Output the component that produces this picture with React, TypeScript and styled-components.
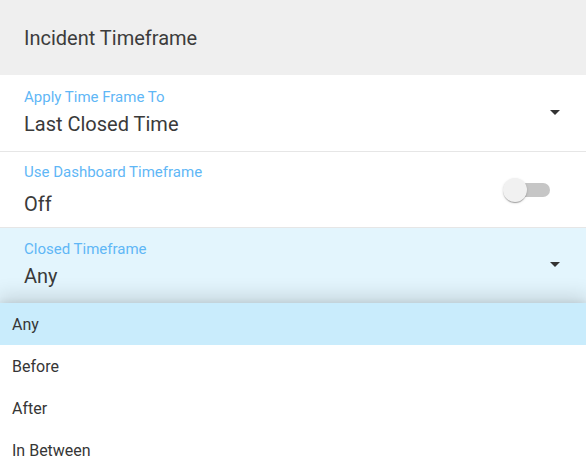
import React, { useState } from "react";
import styled, { createGlobalStyle } from "styled-components";

const GlobalStyle = createGlobalStyle`
  html, body {
    margin: 0;
    padding: 0;
    background: #ffffff;
  }
  body {
    font-family: Roboto, "Noto Sans", Arial, sans-serif;
    color: #333333;
    -webkit-font-smoothing: antialiased;
  }
`;

const Panel = styled.div`
  width: 586px;
  height: 468px;
  overflow: hidden;
  display: flex;
  flex-direction: column;
`;

const Header = styled.header`
  height: 75px;
  flex: none;
  background: #efefef;
  display: flex;
  align-items: center;
  padding: 0 24px;
  font-size: 20px;
  color: #3c3c3c;
`;

const Field = styled.div<{ $active?: boolean; $switchRow?: boolean }>`
  flex: none;
  display: flex;
  align-items: center;
  justify-content: space-between;
  padding: ${({ $switchRow }) => ($switchRow ? "10px 36px 10px 24px" : "11px 19px 14px 24px")};
  background: ${({ $active }) => ($active ? "#e3f5fd" : "#ffffff")};
  border-bottom: ${({ $active }) => ($active ? "none" : "1px solid #e6e6e6")};
`;

const FirstField = styled(Field)`
  padding-top: 12px;
`;

const Texts = styled.div<{ $gap: number }>`
  display: flex;
  flex-direction: column;
  gap: ${({ $gap }) => $gap}px;
`;

const Label = styled.span`
  font-size: 15px;
  line-height: 20px;
  color: #5fb7f6;
`;

const Value = styled.span`
  font-size: 20px;
  line-height: 26px;
  color: #3a3a3a;
`;

const Caret = () => (
  <svg width="24" height="24" viewBox="0 0 24 24" fill="#333333">
    <path d="M7 10l5 5 5-5z" />
  </svg>
);

const SwitchTrack = styled.button<{ $on: boolean }>`
  position: relative;
  width: 34px;
  height: 14px;
  border: none;
  padding: 0;
  border-radius: 7px;
  background: ${({ $on }) => ($on ? "#90caf9" : "#c6c6c6")};
  cursor: pointer;
`;

const SwitchThumb = styled.span<{ $on: boolean }>`
  position: absolute;
  top: -5px;
  left: ${({ $on }) => ($on ? "20px" : "-13px")};
  width: 24px;
  height: 24px;
  border-radius: 50%;
  background: ${({ $on }) => ($on ? "#42a5f5" : "#f1f1f1")};
  box-shadow: 0 2px 1px -1px rgba(0, 0, 0, 0.2), 0 1px 1px 0 rgba(0, 0, 0, 0.14),
    0 1px 3px 0 rgba(0, 0, 0, 0.12);
`;

const Menu = styled.ul`
  position: relative;
  z-index: 1;
  flex: 1;
  margin: 0;
  padding: 0;
  list-style: none;
  background: #ffffff;
  box-shadow: 0 -6px 18px 2px rgba(0, 0, 0, 0.12), 0 -1px 6px rgba(0, 0, 0, 0.08);
`;

const MenuItem = styled.li<{ $selected?: boolean }>`
  height: 42px;
  display: flex;
  align-items: center;
  padding: 0 12px;
  font-size: 16px;
  color: #363636;
  background: ${({ $selected }) => ($selected ? "#c9ecfc" : "transparent")};
  cursor: pointer;
`;

const options = ["Any", "Before", "After", "In Between"];

export default function App() {
  const [useDashboard, setUseDashboard] = useState(false);
  const [closed, setClosed] = useState("Any");

  return (
    <>
      <GlobalStyle />
      <Panel>
        <Header>Incident Timeframe</Header>
        <FirstField>
          <Texts $gap={4}>
            <Label>Apply Time Frame To</Label>
            <Value>Last Closed Time</Value>
          </Texts>
          <Caret />
        </FirstField>
        <Field $switchRow>
          <Texts $gap={9}>
            <Label>Use Dashboard Timeframe</Label>
            <Value>{useDashboard ? "On" : "Off"}</Value>
          </Texts>
          <SwitchTrack $on={useDashboard} onClick={() => setUseDashboard(!useDashboard)}>
            <SwitchThumb $on={useDashboard} />
          </SwitchTrack>
        </Field>
        <Field $active>
          <Texts $gap={4}>
            <Label>Closed Timeframe</Label>
            <Value>{closed}</Value>
          </Texts>
          <Caret />
        </Field>
        <Menu>
          {options.map((o) => (
            <MenuItem key={o} $selected={o === closed} onClick={() => setClosed(o)}>
              {o}
            </MenuItem>
          ))}
        </Menu>
      </Panel>
    </>
  );
}
